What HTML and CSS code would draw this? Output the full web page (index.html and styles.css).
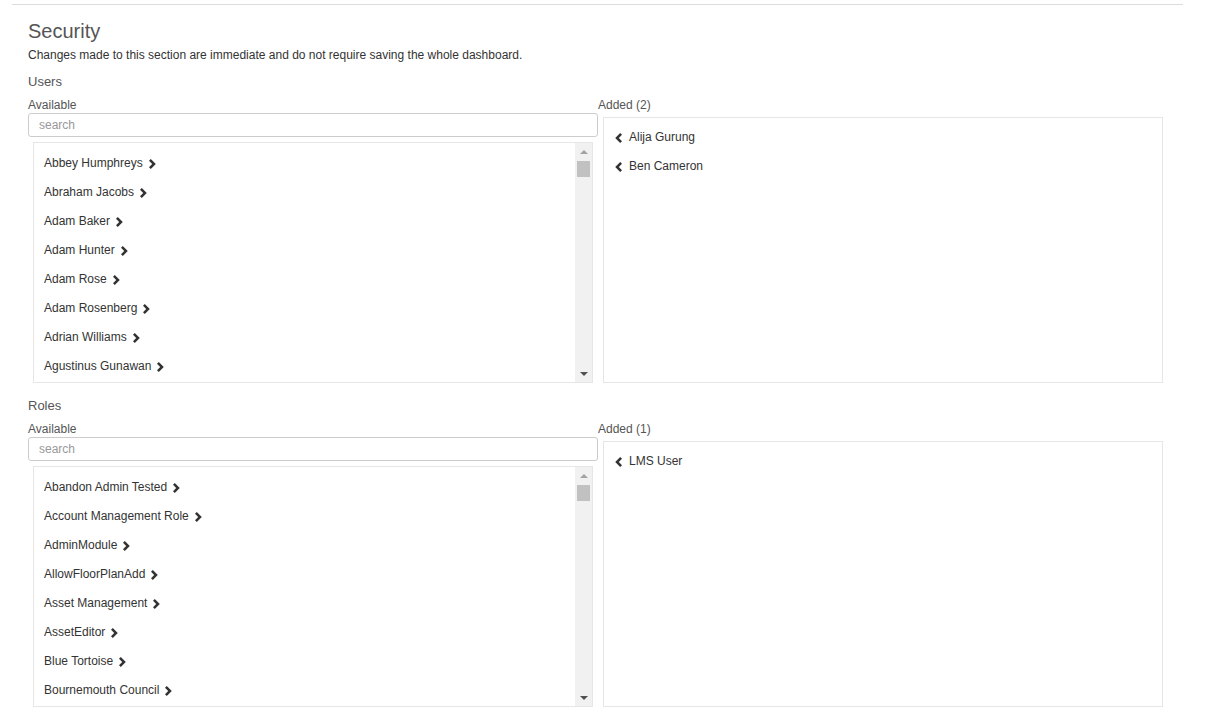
FILE: index.html
```html
<!DOCTYPE html>
<html lang="en">
<head>
    <meta charset="UTF-8">
    <meta name="viewport" content="width=device-width, initial-scale=1.0">
    <title>Dashboard security</title>
    <link rel="stylesheet" href="styles.css">
</head>
<body>
    <section class="painel">
        <h2>Security</h2>
        <p class="aviso">Changes made to this section are immediate and do not require saving the whole dashboard.</p>

        <div class="grupo">
            <div class="grupo-titulo">Users</div>
            <div class="seletor">
                <div class="coluna">
                    <label class="rotulo">Available</label>
                    <input class="busca" type="text" placeholder="search">
                    <div class="caixa">
                        <ul class="lista" id="users-available"></ul>
                        <div class="rolagem">
                            <div class="botao cima"></div>
                            <div class="trilho"><div class="polegar"></div></div>
                            <div class="botao baixo"></div>
                        </div>
                    </div>
                </div>
                <div class="coluna">
                    <span class="rotulo">Added (2)</span>
                    <ul class="lista adicionado" id="users-added"></ul>
                </div>
            </div>
        </div>

        <div class="grupo">
            <div class="grupo-titulo">Roles</div>
            <div class="seletor">
                <div class="coluna">
                    <label class="rotulo">Available</label>
                    <input class="busca" type="text" placeholder="search">
                    <div class="caixa">
                        <ul class="lista" id="roles-available"></ul>
                        <div class="rolagem">
                            <div class="botao cima"></div>
                            <div class="trilho"><div class="polegar"></div></div>
                            <div class="botao baixo"></div>
                        </div>
                    </div>
                </div>
                <div class="coluna">
                    <span class="rotulo">Added (1)</span>
                    <ul class="lista adicionado" id="roles-added"></ul>
                </div>
            </div>
        </div>
    </section>

    <script>
        const users = ['Abbey Humphreys', 'Abraham Jacobs', 'Adam Baker', 'Adam Hunter', 'Adam Rose',
            'Adam Rosenberg', 'Adrian Williams', 'Agustinus Gunawan'];
        const roles = ['Abandon Admin Tested', 'Account Management Role', 'AdminModule', 'AllowFloorPlanAdd',
            'Asset Management', 'AssetEditor', 'Blue Tortoise', 'Bournemouth Council'];

        const setaDireita = '<svg class="seta" width="8" height="10" viewBox="0 0 8 10"><polygon points="1,1.8 2.8,0 7.8,5 2.8,10 1,8.2 4.2,5"/></svg>';
        const setaEsquerda = '<svg class="seta" width="8" height="10" viewBox="0 0 8 10"><polygon points="7,1.8 5.2,0 0.2,5 5.2,10 7,8.2 3.8,5"/></svg>';

        function preencher(id, nomes, adicionado) {
            const lista = document.getElementById(id);
            nomes.forEach(nome => {
                const li = document.createElement('li');
                li.innerHTML = adicionado ? setaEsquerda + '<span>' + nome + '</span>' : '<span>' + nome + '</span>' + setaDireita;
                lista.appendChild(li);
            });
        }

        preencher('users-available', users, false);
        preencher('users-added', ['Alija Gurung', 'Ben Cameron'], true);
        preencher('roles-available', roles, false);
        preencher('roles-added', ['LMS User'], true);
    </script>
</body>
</html>
```

FILE: styles.css
```css
body {
    margin: 0;
    padding: 0;
    font-family: "Liberation Sans", Arial, sans-serif;
    color: #333;
    background-color: #fff;
}

.painel {
    margin: 4px 0 0 12px;
    width: 1140px;
    padding: 15px 15px 0 16px;
    border-top: 1px solid #dcdcdc;
}

.painel h2 {
    margin: 0;
    font-size: 20px;
    line-height: 22px;
    font-weight: normal;
    color: #555;
}

.aviso {
    margin: 5px 0 0 0;
    font-size: 12px;
    line-height: 16px;
    color: #333;
}

.grupo {
    margin-top: 10px;
}

.grupo + .grupo {
    margin-top: 14px;
}

.grupo-titulo {
    font-size: 13px;
    line-height: 18px;
    color: #555;
}

.seletor {
    display: grid;
    grid-template-columns: 570px 570px;
    margin-top: 6px;
}

.coluna {
    display: flex;
    flex-direction: column;
}

.rotulo {
    display: block;
    font-size: 12px;
    line-height: 16px;
    color: #555;
}

.busca {
    box-sizing: border-box;
    width: 100%;
    height: 24px;
    margin: 0;
    padding: 0 10px;
    border: 1px solid #ccc;
    border-radius: 3px;
    font-family: "Liberation Sans", Arial, sans-serif;
    font-size: 12px;
    color: #333;
    outline: none;
}

.busca::placeholder {
    color: #999;
}

.caixa {
    box-sizing: border-box;
    display: flex;
    height: 241px;
    margin: 5px 5px 0 5px;
    border: 1px solid #e6e6e6;
    background-color: #fff;
    overflow: hidden;
}

.lista {
    list-style: none;
    margin: 0;
    padding: 6px 0 0 0;
    flex: 1;
}

.adicionado {
    box-sizing: border-box;
    margin: 4px 5px 0 5px;
    padding-top: 5px;
    border: 1px solid #e6e6e6;
}

.lista li {
    display: flex;
    align-items: center;
    gap: 5px;
    padding: 6px 10px;
    font-size: 12px;
    line-height: 17px;
    color: #333;
    white-space: nowrap;
}

.adicionado li {
    padding-left: 11px;
    gap: 6px;
}

.seta {
    fill: #333;
    flex-shrink: 0;
}

/* barra de rolagem desenhada */
.rolagem {
    width: 17px;
    display: flex;
    flex-direction: column;
    background-color: #f1f1f1;
}

.botao {
    height: 17px;
    display: flex;
    align-items: center;
    justify-content: center;
}

.botao::before {
    content: "";
    width: 0;
    height: 0;
    border-left: 4px solid transparent;
    border-right: 4px solid transparent;
}

.cima::before {
    border-bottom: 4px solid #a3a3a3;
}

.baixo::before {
    border-top: 4px solid #505050;
}

.trilho {
    flex: 1;
    padding: 1px 2px 0 2px;
}

.polegar {
    height: 16px;
    background-color: #c1c1c1;
}
```
